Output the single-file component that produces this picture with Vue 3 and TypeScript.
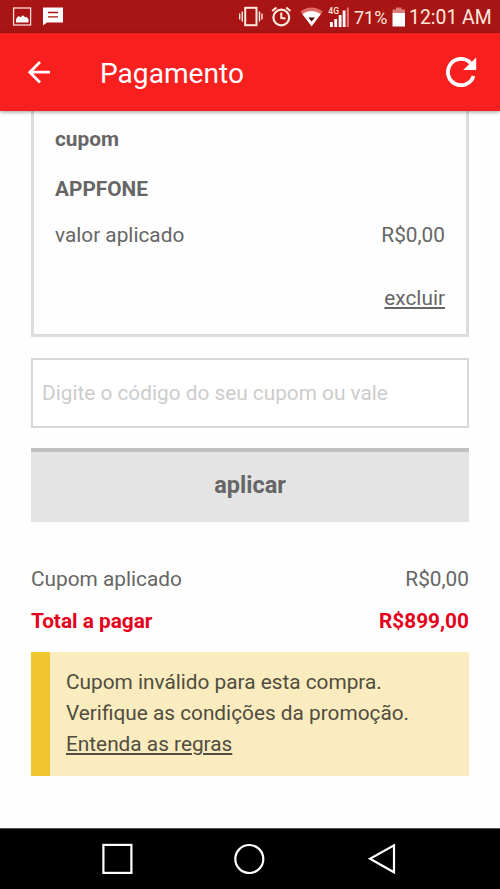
<script setup lang="ts">
import { ref } from 'vue'

interface SummaryRow {
  label: string
  value: string
  total?: boolean
}

const code = ref<string>('')
const coupon = { name: 'APPFONE', value: 'R$0,00' }
const summary: SummaryRow[] = [
  { label: 'Cupom aplicado', value: 'R$0,00' },
  { label: 'Total a pagar', value: 'R$899,00', total: true },
]
</script>

<template>
  <div class="screen">
    <div class="status">
      <svg class="notif" width="70" height="33" viewBox="0 0 70 33">
        <rect x="13.6" y="8" width="17" height="17" fill="none" stroke="#fbdcd8" stroke-width="1.3" />
        <path d="M16 22.5v-3.500l2.500-3 2 1.200 2.500-2 2 2 1.500-.500 2 2.500v3.300z" fill="#fff" />
        <path d="M43 7.500h20v15H47l-4 3z" fill="#fff" />
        <path d="M48 12.500h10M48 16.800h10" stroke="#a91515" stroke-width="1.300" />
      </svg>
      <svg class="signals" width="116" height="33" viewBox="236 0 116 33">
        <g fill="none" stroke="#ffe9dc">
          <rect x="245.200" y="7.800" width="11.300" height="17.400" stroke-width="2" />
          <path d="M242.300 11.500v10M259.500 11.500v10M239.700 13.500v6M262 13.500v6" stroke-width="1.400" />
          <circle cx="281.300" cy="17.500" r="7.900" stroke-width="2.200" />
          <path d="M281.300 12.500v5.500l4.200.500" stroke-width="2" />
          <path d="M272.200 11l4.200-3.500M290.400 11l-4.200-3.500" stroke-width="2.200" />
        </g>
        <path d="M300.500 11.500Q311.500 3.500 322.800 11.500L311.600 26.500z" fill="#df6b69" />
        <path d="M302.300 14Q311.500 8 320.800 14L311.600 26.300z" fill="#fff" />
        <path d="M308.300 17.500h6.600l-3.300 4z" fill="#4a0c0c" />
        <path d="M330 22h2.800v5H330zM334.300 19h2.800v8h-2.800zM338.700 15h2.800v12h-2.800zM342.700 10.500h2.800V27h-2.800z" fill="#fff" />
        <path d="M346.700 7.500h2.300V27h-2.300z" fill="#e36f6d" />
        <text x="328.300" y="14" class="network">4G</text>
      </svg>
      <span class="percent">71%</span>
      <svg class="battery" width="14" height="20" viewBox="0 0 14 20">
        <path d="M4 .5h5.500v2H13v4H.5v-4H4z" fill="#dc7b79" />
        <path d="M.5 6H13v13.500H.5z" fill="#fff" />
      </svg>
      <span class="clock">12:01 AM</span>
    </div>

    <header class="bar">
      <svg width="24" height="24" viewBox="0 0 24 24" fill="none" stroke="#fff" stroke-width="2.800">
        <path d="M23 12.200H3M13 2L2.800 12.200 13 22.400" />
      </svg>
      <h1>Pagamento</h1>
      <svg class="reload" width="32" height="32" viewBox="0 0 32 32">
        <path d="M28.500 20A13.100 13.100 0 1 1 25.500 7" fill="none" stroke="#fff" stroke-width="3.800" />
        <path d="M31.200 1.500V14H18.200z" fill="#fff" />
      </svg>
    </header>

    <main>
      <section class="card">
        <strong>cupom</strong>
        <strong class="name">{{ coupon.name }}</strong>
        <div class="row applied">
          <span>valor aplicado</span>
          <span>{{ coupon.value }}</span>
        </div>
        <a class="remove">excluir</a>
      </section>

      <input v-model="code" type="text" placeholder="Digite o código do seu cupom ou vale" />
      <button type="button">aplicar</button>

      <div class="summary">
        <div v-for="item in summary" :key="item.label" class="row" :class="{ total: item.total }">
          <span>{{ item.label }}</span>
          <span>{{ item.value }}</span>
        </div>
      </div>

      <div class="alert">
        Cupom inválido para esta compra.<br />
        Verifique as condições da promoção.<br />
        <a>Entenda as regras</a>
      </div>
    </main>

    <nav>
      <svg width="500" height="60" viewBox="0 0 500 60" fill="none" stroke="#fff" stroke-width="2.200">
        <rect x="103.400" y="15.900" width="28" height="28" />
        <circle cx="249.300" cy="30" r="14" />
        <path d="M394 16.300v27L370 29.800z" />
      </svg>
    </nav>
  </div>
</template>

<style>
body {
  margin: 0;
  background: #fdfdfd;
}
</style>

<style scoped>
* {
  box-sizing: border-box;
}
.screen {
  width: 500px;
  height: 889px;
  display: flex;
  flex-direction: column;
  overflow: hidden;
  background: #fefefe;
  color: #666;
  font-family: Roboto, sans-serif;
  font-size: 20.8px;
  line-height: 31px;
}
.status {
  height: 33px;
  flex: none;
  display: flex;
  align-items: center;
  background: #a91515;
  color: #ffe9dc;
}
.notif {
  margin-right: 166px;
}
.network {
  font-size: 8.5px;
  font-weight: 500;
  fill: #ffe9dc;
}
.percent {
  width: 40px;
  padding-left: 2px;
  font-size: 18px;
  line-height: 33px;
  padding-top: 2px;
}
.battery {
  flex: none;
  margin-top: 1px;
}
.clock {
  padding: 2px 0 0 3px;
  font-size: 19.400px;
  line-height: 33px;
  white-space: nowrap;
}
.bar {
  height: 78px;
  flex: none;
  display: flex;
  align-items: center;
  padding: 0 23px 0 27px;
  background: #f81f1f;
  box-shadow: 0 1px 4px rgba(0, 0, 0, 0.4);
  position: relative;
}
h1 {
  margin: 3px 0 0 49px;
  color: #fff;
  font-size: 28.100px;
  font-weight: 400;
}
.reload {
  margin-left: auto;
}
main {
  flex: 1;
  padding: 0 31px;
  display: flex;
  flex-direction: column;
}
.card {
  height: 226px;
  padding: 13px 21px 0;
  border: 3px solid #ddd;
  border-top: 0;
  display: flex;
  flex-direction: column;
}
strong,
.total {
  font-weight: 700;
}
.name {
  margin-top: 19px;
}
.row {
  display: flex;
  justify-content: space-between;
}
.applied {
  margin-top: 15px;
}
.remove {
  margin-top: 32px;
  align-self: flex-end;
}
a {
  text-decoration: underline;
}
input {
  height: 70px;
  margin-top: 21px;
  padding: 0 9px;
  border: 2px solid #d8d8d8;
  border-radius: 0;
  background: #fff;
  font: inherit;
  color: #666;
}
input::placeholder {
  color: #ccc;
}
button {
  height: 74px;
  margin-top: 20px;
  padding: 0 0 3px;
  border: 0;
  border-top: 4px solid #c1c1c1;
  background: #e4e4e4;
  color: #666;
  font: 700 23.500px/67px Roboto, sans-serif;
}
.summary {
  margin-top: 42px;
  display: flex;
  flex-direction: column;
  gap: 11px;
}
.total {
  color: #e4001b;
}
.alert {
  height: 124px;
  margin-top: 15px;
  padding: 15px 16px;
  border-left: 19px solid #efc62f;
  background: #faecbf;
  color: #514d40;
  line-height: 31.200px;
}
nav {
  height: 61px;
  flex: none;
  background: #000;
  border-top: 1px solid #555;
}
</style>
